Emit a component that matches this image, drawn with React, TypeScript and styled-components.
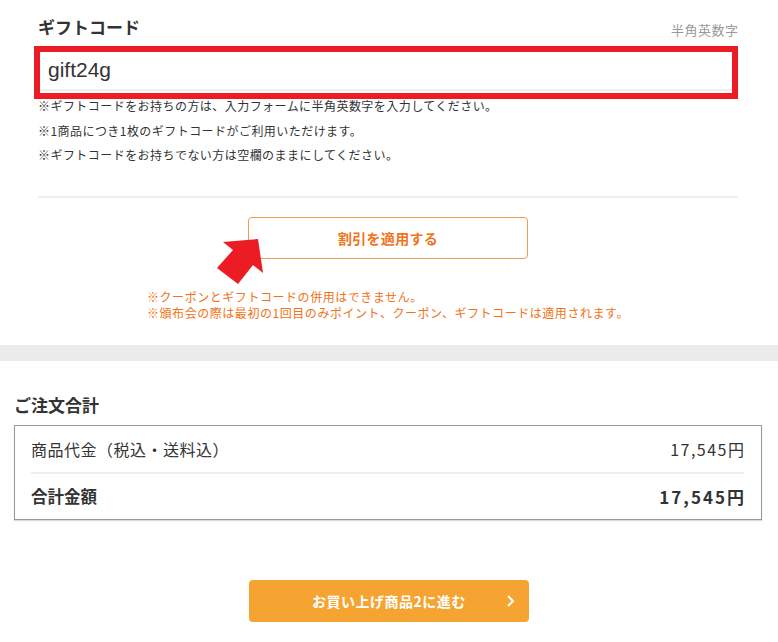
import React from 'react';
import styled, { createGlobalStyle } from 'styled-components';

const GlobalSt = createGlobalStyle`
  body {
    margin: 0;
    background: #fff;
    color: #333;
    font-family: "Noto Sans CJK JP", "Noto Sans", sans-serif;
    text-spacing-trim: space-all;
  }
`;

const GiftSectionSt = styled.section`
  padding: 14px 40px 0 38px;
`;

const HeadRowSt = styled.div`
  display: flex;
  justify-content: space-between;
  align-items: center;
`;

const TitleSt = styled.h2`
  margin: 0;
  font-size: 17px;
  line-height: 24px;
  font-weight: bold;
  color: #333;
`;

const HintSt = styled.span`
  font-size: 13px;
  letter-spacing: 0.5px;
  margin-right: -0.5px;
  color: #999;
  margin-top: 6px;
`;

const InputWrapSt = styled.div`
  position: relative;
  margin: 11px 4px 0 0;
`;

const InputSt = styled.input`
  display: block;
  width: 100%;
  box-sizing: border-box;
  height: 41px;
  border: none;
  border-bottom: 2px solid #eee;
  padding: 0 10px;
  font-family: "Liberation Sans", Arial, sans-serif;
  font-size: 21px;
  color: #333;
  outline: none;
  background: #fff;
`;

const HighlightSt = styled.div`
  position: absolute;
  top: -4px;
  left: -4px;
  right: -4px;
  bottom: -8px;
  border: 6px solid #ec1c24;
  pointer-events: none;
`;

const NotesSt = styled.ul`
  list-style: none;
  margin: 3px 0 0;
  padding: 0;
  font-size: 12px;
  line-height: 24.5px;
  letter-spacing: 0.45px;
  color: #333;
`;

const DividerSt = styled.hr`
  border: none;
  border-top: 2px solid #eee;
  margin: 28px 0 0;
`;

const ApplyRowSt = styled.div`
  position: relative;
  display: flex;
  justify-content: center;
  margin-top: 19px;
`;

const OutlineButtonSt = styled.button`
  width: 280px;
  height: 42px;
  box-sizing: border-box;
  background: #fff;
  border: 1px solid #f29a50;
  border-radius: 4px;
  color: #f07318;
  font-family: inherit;
  font-size: 14px;
  letter-spacing: 0.3px;
  font-weight: bold;
  cursor: pointer;
`;

const ArrowSt = styled.svg`
  position: absolute;
  left: 172px;
  top: 13px;
`;

const CautionWrapSt = styled.div`
  display: flex;
  justify-content: center;
  margin-top: 30px;
`;

const CautionSt = styled.ul`
  list-style: none;
  margin: 0;
  padding: 0;
  font-size: 12px;
  line-height: 16px;
  letter-spacing: 0.55px;
  color: #f07318;
`;

const BandSt = styled.div`
  height: 16px;
  background: #ebebeb;
  margin-top: 24px;
`;

const TotalSectionSt = styled.section`
  padding: 32px 16px 0 14px;
`;

const TotalBoxSt = styled.div`
  margin-top: 8px;
  border: 1px solid #999;
  box-shadow: 0 1px 1px rgba(0, 0, 0, 0.15);
  padding: 0 17px 0 16px;
`;

const RowSt = styled.div<{ $total?: boolean }>`
  display: flex;
  justify-content: space-between;
  align-items: center;
  height: ${({ $total }) => ($total ? '45px' : '46px')};
  font-size: ${({ $total }) => ($total ? '16.5px' : '16px')};
  letter-spacing: ${({ $total }) => ($total ? '0' : '0.5px')};
  font-weight: ${({ $total }) => ($total ? 'bold' : 'normal')};
  border-top: ${({ $total }) => ($total ? '2px solid #eee' : 'none')};
  color: #333;
`;

const AmountSt = styled.span<{ $total?: boolean }>`
  font-size: ${({ $total }) => ($total ? '17px' : '16px')};
  letter-spacing: ${({ $total }) => ($total ? '2px' : '1.5px')};
  margin-right: ${({ $total }) => ($total ? '-2px' : '-1.5px')};
`;

const ProceedRowSt = styled.div`
  display: flex;
  justify-content: center;
  margin-top: 60px;
  padding-bottom: 20px;
`;

const ProceedButtonSt = styled.button`
  position: relative;
  width: 280px;
  height: 42px;
  border: none;
  border-radius: 4px;
  background: #f5a431;
  color: #fff;
  font-family: inherit;
  font-size: 14px;
  letter-spacing: 0.5px;
  font-weight: bold;
  cursor: pointer;
`;

const ChevronSt = styled.svg`
  position: absolute;
  right: 13px;
  top: 15px;
`;

export default function App() {
  return (
    <>
      <GlobalSt />
      <GiftSectionSt>
        <HeadRowSt>
          <TitleSt>ギフトコード</TitleSt>
          <HintSt>半角英数字</HintSt>
        </HeadRowSt>
        <InputWrapSt>
          <InputSt defaultValue='gift24g' />
          <HighlightSt />
        </InputWrapSt>
        <NotesSt>
          <li>※ギフトコードをお持ちの方は、入力フォームに半角英数字を入力してください。</li>
          <li>※1商品につき1枚のギフトコードがご利用いただけます。</li>
          <li>※ギフトコードをお持ちでない方は空欄のままにしてください。</li>
        </NotesSt>
        <DividerSt />
        <ApplyRowSt>
          <OutlineButtonSt>割引を適用する</OutlineButtonSt>
          <ArrowSt width='60' height='60' viewBox='0 0 60 60'>
            <polygon points='48,9 13,12 23,20 7,38 28,54 43,35 53,43' fill='#ec1c24' />
          </ArrowSt>
        </ApplyRowSt>
        <CautionWrapSt>
          <CautionSt>
            <li>※クーポンとギフトコードの併用はできません。</li>
            <li>※頒布会の際は最初の1回目のみポイント、クーポン、ギフトコードは適用されます。</li>
          </CautionSt>
        </CautionWrapSt>
      </GiftSectionSt>
      <BandSt />
      <TotalSectionSt>
        <TitleSt>ご注文合計</TitleSt>
        <TotalBoxSt>
          <RowSt>
            <span>商品代金（税込・送料込）</span>
            <AmountSt>17,545円</AmountSt>
          </RowSt>
          <RowSt $total>
            <span>合計金額</span>
            <AmountSt $total>17,545円</AmountSt>
          </RowSt>
        </TotalBoxSt>
      </TotalSectionSt>
      <ProceedRowSt>
        <ProceedButtonSt>
          お買い上げ商品2に進む
          <ChevronSt width='10' height='12' viewBox='0 0 10 12'>
            <polyline points='2,1 7,6 2,11' fill='none' stroke='#fff' strokeWidth='2' />
          </ChevronSt>
        </ProceedButtonSt>
      </ProceedRowSt>
    </>
  );
}
